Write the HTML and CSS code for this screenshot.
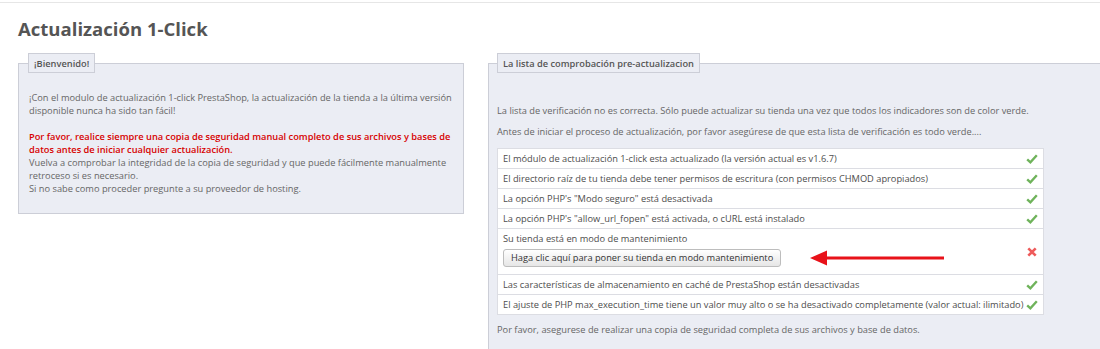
FILE: index.html
```html
<!DOCTYPE html>
<html lang="es">
<head>
<meta charset="utf-8">
<title>Actualización 1-Click</title>
<link rel="stylesheet" href="styles.css">
</head>
<body>
<div class="topline"></div>
<h2 class="page-title">Actualización 1-Click</h2>
<div class="columns">
  <fieldset class="panel panel-welcome">
    <legend class="panel-legend">¡Bienvenido!</legend>
    <p class="welcome-text">¡Con el modulo de actualización 1-click PrestaShop, la actualización de la tienda a la última versión disponible nunca ha sido tan fácil!</p>
    <p class="welcome-text"><br><strong class="warn">Por favor, realice siempre una copia de seguridad manual completo de sus archivos y bases de datos antes de iniciar cualquier actualización.</strong><br>Vuelva a comprobar la integridad de la copia de seguridad y que puede fácilmente manualmente retroceso si es necesario.<br>Si no sabe como proceder pregunte a su proveedor de hosting.</p>
  </fieldset>
  <fieldset class="panel panel-check">
    <legend class="panel-legend">La lista de comprobación pre-actualizacion</legend>
    <p class="intro">La lista de verificación no es correcta. Sólo puede actualizar su tienda una vez que todos los indicadores son de color verde.</p>
    <p class="intro">Antes de iniciar el proceso de actualización, por favor asegúrese de que esta lista de verificación es todo verde....</p>
    <table class="checklist">
      <tr><td class="label">El módulo de actualización 1-click esta actualizado (la versión actual es v1.6.7)</td><td class="status"><svg class="ok" viewBox="0 0 12 10" width="12" height="10"><path d="M1.2 5.4 L4.4 8.3 L10.8 1.3"/></svg></td></tr>
      <tr><td class="label">El directorio raíz de tu tienda debe tener permisos de escritura (con permisos CHMOD apropiados)</td><td class="status"><svg class="ok" viewBox="0 0 12 10" width="12" height="10"><path d="M1.2 5.4 L4.4 8.3 L10.8 1.3"/></svg></td></tr>
      <tr><td class="label">La opción PHP's "Modo seguro" está desactivada</td><td class="status"><svg class="ok" viewBox="0 0 12 10" width="12" height="10"><path d="M1.2 5.4 L4.4 8.3 L10.8 1.3"/></svg></td></tr>
      <tr><td class="label">La opción PHP's "allow_url_fopen" está activada, o cURL está instalado</td><td class="status"><svg class="ok" viewBox="0 0 12 10" width="12" height="10"><path d="M1.2 5.4 L4.4 8.3 L10.8 1.3"/></svg></td></tr>
      <tr><td class="label">Su tienda está en modo de mantenimiento<br><span class="action-line"><button class="btn" type="button">Haga clic aquí para poner su tienda en modo mantenimiento</button><svg class="arrow" viewBox="0 0 134 16" width="134" height="16"><path d="M0 8 L17 0.5 L17 6.4 L134 6.4 L134 9.6 L17 9.6 L17 15.5 Z"/></svg></span></td><td class="status"><svg class="ko" viewBox="0 0 10 10" width="10" height="10"><path d="M1.3 1.3 L8.7 8.7 M8.7 1.3 L1.3 8.7"/></svg></td></tr>
      <tr><td class="label">Las características de almacenamiento en caché de PrestaShop están desactivadas</td><td class="status"><svg class="ok" viewBox="0 0 12 10" width="12" height="10"><path d="M1.2 5.4 L4.4 8.3 L10.8 1.3"/></svg></td></tr>
      <tr><td class="label">El ajuste de PHP max_execution_time tiene un valor muy alto o se ha desactivado completamente (valor actual: ilimitado)</td><td class="status"><svg class="ok" viewBox="0 0 12 10" width="12" height="10"><path d="M1.2 5.4 L4.4 8.3 L10.8 1.3"/></svg></td></tr>
    </table>
    <p class="intro outro">Por favor, asegurese de realizar una copia de seguridad completa de sus archivos y base de datos.</p>
  </fieldset>
</div>
</body>
</html>
```
FILE: styles.css
```css
html, body {
  margin: 0;
  padding: 0;
  background: #ffffff;
  overflow: hidden;
}
body {
  font-family: "Open Sans", "Liberation Sans", sans-serif;
  font-size: 9.27px;
  line-height: 13px;
  color: #666666;
}
.topline {
  height: 2px;
  border-bottom: 1px solid #e6e6e6;
}
.page-title {
  margin: 14px 0 0 18px;
  font-size: 18.55px;
  line-height: 24px;
  font-weight: 700;
  color: #555555;
}
.columns {
  display: flex;
  align-items: flex-start;
  gap: 24px;
  margin-top: 12px;
  padding-left: 18px;
}
.panel {
  margin: 0;
  min-width: 0;
  background: #ebedf4;
  border: 1px solid #ccced7;
}
.panel-legend {
  margin-left: -1px;
  padding: 3px 5px 2px;
  background: #ebedf4;
  border: 1px solid #ccced7;
  font-weight: 600;
  color: #555555;
  line-height: 13px;
}
.panel-welcome {
  box-sizing: border-box;
  width: 446px;
  flex: none;
  padding: 18px 4px 18px 10px;
}
.welcome-text {
  margin: 0;
}
.warn {
  color: #d70000;
  font-weight: 600;
}
.panel-check {
  flex: 1;
  border-right: 0;
  padding: 31px 0 30px 8px;
}
.panel-check .panel-legend {
  margin-left: 0;
}
.intro {
  margin: 0 0 8px;
}
.checklist {
  border-collapse: collapse;
  background: #ffffff;
  margin-top: 10px;
  color: #4d4d4d;
}
.checklist td {
  border: 1px solid #dcdde3;
  padding: 3px 5px;
  vertical-align: middle;
}
.checklist td.label {
  border-right: 0;
  padding-right: 3px;
  white-space: nowrap;
}
.checklist td.status {
  border-left: 0;
  width: 12px;
  padding: 3px 5px 3px 0;
  text-align: center;
}
.status svg {
  display: block;
  margin: 0 auto;
  fill: none;
  stroke-linecap: butt;
}
.ok {
  stroke: #6fb35b;
  stroke-width: 2.4;
}
.ko {
  stroke: #ee5b5b;
  stroke-width: 2.6;
}
.action-line {
  display: flex;
  align-items: center;
  margin: 4px 0 4px;
}
.btn {
  height: 18px;
  padding: 0 7px;
  font: inherit;
  line-height: 16px;
  color: #333333;
  background: linear-gradient(#ffffff, #e6e6e6);
  border: 1px solid #bdbdbd;
  border-radius: 3px;
}
.arrow {
  margin-left: 29px;
  fill: #e8121a;
}
.outro {
  margin-top: 8px;
}
```
